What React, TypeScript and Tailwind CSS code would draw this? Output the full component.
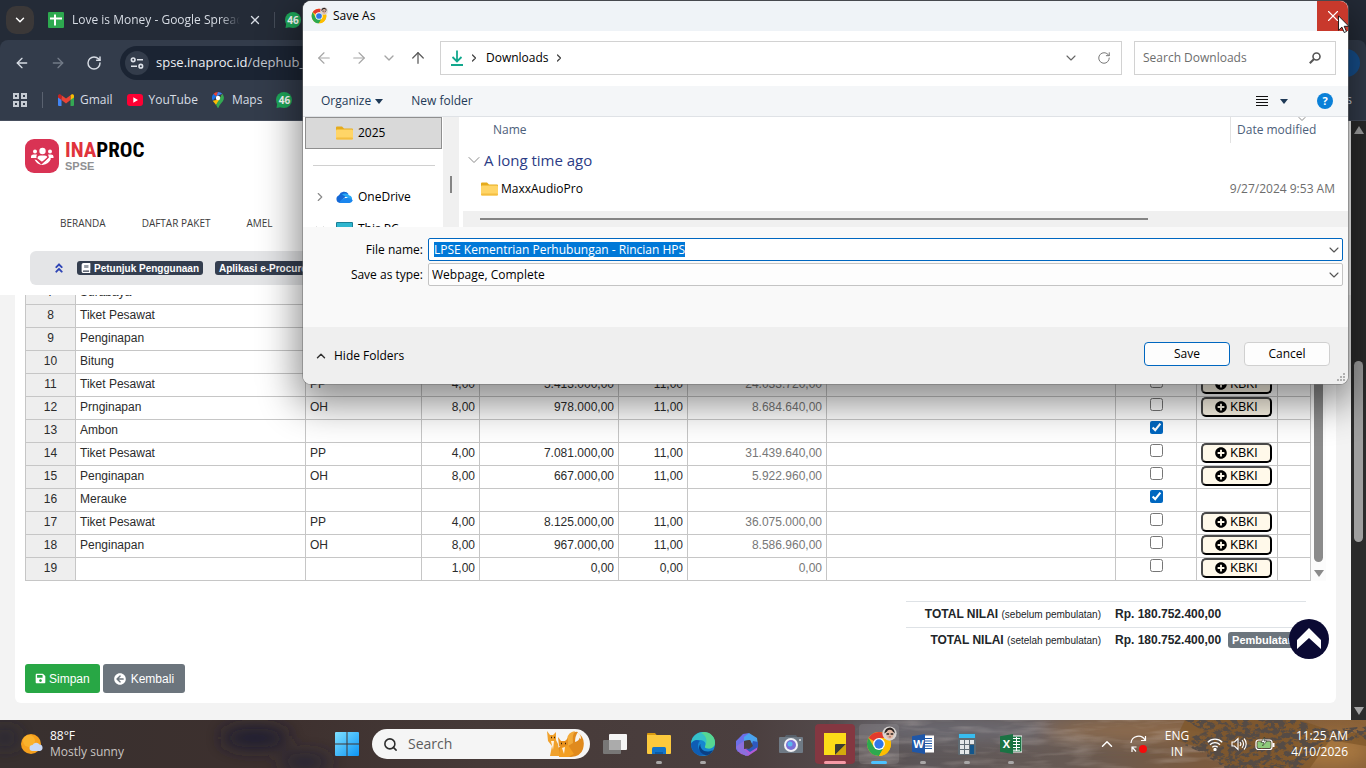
import React, { useEffect, useRef } from 'react'
import {
  ArrowLeft, ArrowRight, ArrowUp, ChevronDown, ChevronRight, ChevronUp, RotateCw, Search, X,
} from 'lucide-react'
import { FaBook, FaPlusCircle, FaSave, FaArrowCircleLeft, FaAngleDoubleUp } from 'react-icons/fa'

// ---------------------------------------------------------------------------
// Data
// ---------------------------------------------------------------------------
type Row = {
  no: number
  name: string
  unit?: string
  volume?: string
  price?: string
  tax?: string
  total?: string
  checked?: boolean
  kbki?: boolean
}

const rows: Row[] = [
  { no: 7, name: 'Surabaya', checked: true },
  { no: 8, name: 'Tiket Pesawat', kbki: true },
  { no: 9, name: 'Penginapan', kbki: true },
  { no: 10, name: 'Bitung', checked: true },
  { no: 11, name: 'Tiket Pesawat', unit: 'PP', volume: '4,00', price: '5.413.000,00', tax: '11,00', total: '24.033.720,00', kbki: true },
  { no: 12, name: 'Prnginapan', unit: 'OH', volume: '8,00', price: '978.000,00', tax: '11,00', total: '8.684.640,00', kbki: true },
  { no: 13, name: 'Ambon', checked: true },
  { no: 14, name: 'Tiket Pesawat', unit: 'PP', volume: '4,00', price: '7.081.000,00', tax: '11,00', total: '31.439.640,00', kbki: true },
  { no: 15, name: 'Penginapan', unit: 'OH', volume: '8,00', price: '667.000,00', tax: '11,00', total: '5.922.960,00', kbki: true },
  { no: 16, name: 'Merauke', checked: true },
  { no: 17, name: 'Tiket Pesawat', unit: 'PP', volume: '4,00', price: '8.125.000,00', tax: '11,00', total: '36.075.000,00', kbki: true },
  { no: 18, name: 'Penginapan', unit: 'OH', volume: '8,00', price: '967.000,00', tax: '11,00', total: '8.586.960,00', kbki: true },
  { no: 19, name: '', volume: '1,00', price: '0,00', tax: '0,00', total: '0,00', kbki: true },
]

// ---------------------------------------------------------------------------
// Icons
// ---------------------------------------------------------------------------
function ChromeIcon({ className }: { className?: string }) {
  return (
    <svg viewBox="0 0 48 48" className={className}>
      <circle cx="24" cy="24" r="22" fill="#fbc116" />
      <path d="M24 24 L4.9 13 A22 22 0 0 1 43.1 13 L24 13 Z" fill="#e33b2e" />
      <path d="M4.9 13 A22 22 0 0 0 24 46 L33.5 29.5 L14.5 29.5 Z" fill="#2da94f" />
      <path d="M24 13 H43.1 A22 22 0 0 1 24 46 L33.5 29.5 Z" fill="#fdbd00" />
      <circle cx="24" cy="24" r="11" fill="#fff" />
      <circle cx="24" cy="24" r="8.6" fill="#2f77e8" />
    </svg>
  )
}

function Avatar({ className }: { className?: string }) {
  return (
    <svg viewBox="0 0 20 20" className={className}>
      <circle cx="10" cy="10" r="9.5" fill="#d9d4d2" />
      <path d="M3 10 Q4 2 11 2 Q17 3 17 10 L15 8 L6 8 Z" fill="#2a2322" />
      <ellipse cx="10.5" cy="11" rx="5" ry="6" fill="#e3b9a4" />
      <path d="M6 9.5h3.5v2H6zM11.5 9.5H15v2h-3.500z" fill="#2a2322" />
      <path d="M9 14.500h3" stroke="#8c4a41" />
    </svg>
  )
}

function SheetsIcon() {
  return (
    <svg viewBox="0 0 16 16" className="size-4 shrink-0">
      <rect width="16" height="16" rx="1" fill="#2da94f" />
      <path d="M2 6.500h12M7 2.500v11" stroke="#fff" strokeWidth="2" />
    </svg>
  )
}

function UnreadBadge() {
  return (
    <span className="relative flex size-4 shrink-0 items-center justify-center">
      <svg viewBox="0 0 16 16" className="absolute size-4">
        <circle cx="8" cy="8" r="8" fill="#1fa85a" />
        <path d="M0.500 16 L1.500 10 L6 15 Z" fill="#1fa85a" />
      </svg>
      <span className="relative text-[10px] font-bold leading-none text-white">46</span>
    </span>
  )
}

function GmailIcon() {
  return (
    <svg viewBox="0 0 16 12" className="h-3 w-4">
      <path d="M0 1.500V11a1 1 0 0 0 1 1h2.500V4z" fill="#4285f4" />
      <path d="M12.500 12H15a1 1 0 0 0 1-1V1.500L12.500 4z" fill="#34a853" />
      <path d="M12.500 1.500V6L16 3.400V2c0-1.700-1.700-2.200-2.800-1.300z" fill="#fbbc04" />
      <path d="M3.500 6V1.200L8 4.600l4.500-3.400V6L8 9.400z" fill="#ea4335" />
      <path d="M0 2v1.400L3.500 6V1.200L2.800.7C1.700-.2 0 .4 0 2z" fill="#c5221f" />
    </svg>
  )
}

function YouTubeIcon() {
  return (
    <svg viewBox="0 0 16 12" className="h-3 w-4">
      <rect width="16" height="12" rx="3" fill="#ff0033" />
      <path d="M6.300 3.300 L11 6 L6.300 8.700z" fill="#fff" />
    </svg>
  )
}

function MapsIcon() {
  return (
    <svg viewBox="0 0 12 16" className="h-4 w-3">
      <path d="M6 0a6 6 0 0 0-4.600 2.100L4.300 4.600z" fill="#ea4335" />
      <path d="M6 0 L4.300 4.600 8.200 2.600 10.400 1.900A6 6 0 0 0 6 0z" fill="#4285f4" />
      <path d="M1.400 2.100A6 6 0 0 0 .8 8.800L4.300 4.600z" fill="#1a73e8" />
      <path d="M.8 8.800C1.500 10 3 11.500 4 13l6-8.500.4-2.600L7.600 7.200z" fill="#fbbc04" />
      <path d="M10.400 1.900C12.300 4 12.300 7 11 9 9.500 11.200 7.500 12.500 6.700 15.200 6.400 16.200 5.600 16.200 5.300 15.200 5 14.300 4.600 13.700 4 13z" fill="#34a853" />
      <circle cx="6" cy="6" r="2.200" fill="#fff" />
    </svg>
  )
}

function SiteInfoIcon() {
  return (
    <svg viewBox="0 0 14 12" className="h-3 w-3.5" fill="none" stroke="#dfe3ea" strokeWidth="1.600">
      <circle cx="3.200" cy="2.800" r="1.800" />
      <path d="M7 2.800h6M1 9.200h6" />
      <circle cx="10.800" cy="9.200" r="1.800" />
    </svg>
  )
}

function FolderIcon() {
  return (
    <svg viewBox="0 0 17 14" className="h-3.5 w-[17px] shrink-0">
      <path d="M0 1.500A1 1 0 0 1 1 .5h5L8 2.500h8a1 1 0 0 1 1 1V7H0z" fill="#e5ab1c" />
      <rect y="3.500" width="17" height="10" rx="1" fill="#ffd567" />
      <rect y="11.500" width="17" height="2" rx="1" fill="#f4be41" />
    </svg>
  )
}

function OneDriveIcon() {
  return (
    <svg viewBox="0 0 17 12" className="h-3 w-[17px] shrink-0">
      <path d="M4 12a4 4 0 0 1-1-7.700A5.500 5.500 0 0 1 12.500 3L6 9z" fill="#1468d6" />
      <path d="M6 3.500A5.500 5.500 0 0 1 13.500 4.500 3.900 3.900 0 0 1 13 12H4c1-4 4-5 8-5z" fill="#28a8f5" />
      <path d="M3.500 12c1-3.500 4-5.200 8-5 2.500 0 4.500 1 5.300 2.600A3.900 3.900 0 0 1 13.200 12z" fill="#1a86ee" />
    </svg>
  )
}

function DownloadsIcon() {
  return (
    <svg viewBox="0 0 14 16" className="h-4 w-3.5" fill="none" stroke="#12a88d" strokeWidth="1.800">
      <path d="M7 .5v11M2.500 7l4.500 4.500L11.500 7M1 15h12" />
    </svg>
  )
}

function MagnifierIcon() {
  return (
    <svg viewBox="0 0 12 12" className="size-3" fill="none" stroke="#555" strokeWidth="1.600">
      <circle cx="7.500" cy="4.500" r="3.500" />
      <path d="M5 7L.8 11.200" strokeWidth="2" />
    </svg>
  )
}

function InaprocLogo() {
  return (
    <svg viewBox="0 0 34 34" className="size-[34px]">
      <rect width="34" height="34" rx="9" fill="#d93354" />
      <g fill="#fff">
        <circle cx="17.500" cy="12" r="3.200" />
        <circle cx="10" cy="12.500" r="2" />
        <circle cx="25" cy="12.500" r="2" />
        <path d="M6 19v-1.500Q6 15.500 8.500 15.500H12Q11 17 11.500 19z" />
        <path d="M28.500 19v-1.500q0-2-2.500-2H23Q24 17 23.500 19z" />
        <path d="M12.500 19.500q0-3 3-3h4q3 0 3 3l-5.500 3.300z" />
        <path d="M9.500 20.500l3 .8 4 4 7.500-7.300 2 1.800Q24 25 17.500 26q-5.500-.5-8-5.500z" />
      </g>
      <path d="M12 20.500l4.300 4L23.500 18" fill="none" stroke="#d93354" strokeWidth="1.300" />
    </svg>
  )
}

// ---------------------------------------------------------------------------
// Browser chrome
// ---------------------------------------------------------------------------
function BrowserBars() {
  return (
    <div className="shrink-0 bg-[#242b37] text-[12px] text-[#d7dce4]">
      {/* Tab strip */}
      <div className="flex h-10 items-center pl-1.5">
        <button aria-label="Search tabs" className="flex size-7 items-center justify-center rounded-[10px] bg-[#3b3838]">
          <ChevronDown className="size-3.5 text-white" strokeWidth={2.5} />
        </button>
        <div className="ml-3.5 flex items-center">
          <SheetsIcon />
          <span className="ml-2 w-[168px] overflow-hidden whitespace-nowrap [mask-image:linear-gradient(to_right,black_88%,transparent)]">
            Love is Money - Google Spreadsheets
          </span>
          <button aria-label="Close tab" className="ml-2">
            <X className="size-3.5" strokeWidth={2.2} />
          </button>
        </div>
        <span className="ml-3 mr-2.5 h-4 w-px bg-[#454c58]" />
        <UnreadBadge />
      </div>

      {/* Toolbar */}
      <div className="flex h-[46px] items-center rounded-t-lg bg-[#333c4b] pl-3.5">
        <button aria-label="Back"><ArrowLeft className="size-4" /></button>
        <button aria-label="Forward" className="ml-5 text-[#737b88]"><ArrowRight className="size-4" /></button>
        <button aria-label="Reload" className="ml-5"><RotateCw className="size-4" strokeWidth={2.2} /></button>
        <div className="ml-[18px] flex h-[34px] flex-1 items-center rounded-full bg-[#1b2433] pl-[5px]">
          <span className="flex size-6 items-center justify-center rounded-full bg-[#333c4b]">
            <SiteInfoIcon />
          </span>
          <span className="ml-[7px] text-[13px] text-[#c3c8d0]">
            <span className="text-[#edf0f4]">spse.inaproc.id</span>/dephub_
          </span>
        </div>
        <span className="ml-4 mr-1.5 size-7 rounded-full bg-[#16508f]" />
      </div>

      {/* Bookmarks */}
      <div className="flex h-[35px] items-center border-b border-[#474f5e] bg-[#333c4b] pb-1.5 pl-3">
        <svg viewBox="0 0 16 16" className="size-4" fill="none" stroke="#c6cbd3" strokeWidth="2">
          <path d="M2 2h4v4H2zM10 2h4v4h-4zM2 10h4v4H2zM10 10h4v4h-4z" />
        </svg>
        <span className="ml-3.5 mr-[15px] h-4 w-px bg-[#5a6270]" />
        <a href="#gmail" className="flex items-center gap-1.5"><GmailIcon />Gmail</a>
        <a href="#youtube" className="ml-3.5 flex items-center gap-1.5"><YouTubeIcon />YouTube</a>
        <a href="#maps" className="ml-3.5 mr-3.5 flex items-center gap-2"><MapsIcon />Maps</a>
        <UnreadBadge />
        <span className="ml-auto mr-3.5">All Bookmarks</span>
      </div>
    </div>
  )
}

// ---------------------------------------------------------------------------
// SPSE page
// ---------------------------------------------------------------------------
function PageHeader() {
  return (
    <header className="shrink-0 bg-white">
      <div className="flex h-[34px] items-start gap-[6px] pl-[25px] mt-[18px]">
        <InaprocLogo />
        <div>
          <div className="font-['Liberation_Sans_Narrow','Roboto_Condensed','Liberation_Sans',sans-serif] text-[21px] font-bold leading-[22px] text-black">
            <span className="text-[#e0333c]">INA</span>PROC
          </div>
          <div className="font-['Liberation_Sans',sans-serif] text-[11px] font-bold leading-[10px] text-[#8f9092]">SPSE</div>
        </div>
      </div>
      <nav className="mt-[42px] flex h-4 items-center gap-9 pl-[60px] text-[10px] text-[#3c3c3c]">
        <a href="#beranda">BERANDA</a>
        <a href="#daftar">DAFTAR PAKET</a>
        <a href="#amel">AMEL</a>
      </nav>
      <div className="mx-[30px] mt-5 mb-[10px] flex h-[34px] items-center rounded-md bg-[#e4e5e7] pl-[23px] font-['Liberation_Sans',sans-serif] text-[10px] font-bold text-white">
        <FaAngleDoubleUp className="size-3 text-[#2f45b5]" />
        <a href="#petunjuk" className="ml-3 flex h-3.5 items-center gap-[3px] rounded-[3px] bg-[#343e4f] px-1">
          <FaBook className="size-2.5" />
          Petunjuk Penggunaan
        </a>
        <a href="#aplikasi" className="ml-3 flex h-3.5 items-center rounded-[3px] bg-[#343e4f] px-1">
          Aplikasi e-Procurement
        </a>
      </div>
    </header>
  )
}

function PriceTable() {
  return (
    <div className="flex min-h-0 flex-1">
      <div className="flex min-w-0 flex-1 flex-col justify-end overflow-hidden">
        <table className="w-full table-fixed border-collapse text-[12px] leading-[14px] text-[#2b2b2b]">
          <colgroup>
            <col className="w-[50px]" />
            <col className="w-[230px]" />
            <col className="w-[116px]" />
            <col className="w-[58px]" />
            <col className="w-[139px]" />
            <col className="w-[69px]" />
            <col className="w-[139px]" />
            <col />
            <col className="w-[81px]" />
            <col className="w-[81px]" />
            <col className="w-[33px]" />
          </colgroup>
          <tbody>
            {rows.map(row => (
              <tr key={row.no} className="h-[23px] [&>td]:border [&>td]:border-[#c6c6c6] [&>td]:px-1 [&>td]:pt-0 [&>td]:pb-0.5">
                <th scope="row" className="border border-[#c6c6c6] bg-[#eeeeee] pb-0.5 text-center font-normal">{row.no}</th>
                <td>{row.name}</td>
                <td>{row.unit}</td>
                <td className="text-right">{row.volume}</td>
                <td className="text-right">{row.price}</td>
                <td className="text-right">{row.tax}</td>
                <td className="text-right text-[#777]">{row.total}</td>
                <td />
                <td>
                  <input
                    type="checkbox"
                    defaultChecked={row.checked}
                    aria-label={`Header ${row.no}`}
                    className="mx-auto mb-1 block size-[13px] accent-[#0067c0]"
                  />
                </td>
                <td>
                  {row.kbki && (
                    <button className="flex h-5 w-[71px] items-center justify-center gap-[3px] rounded-[5px] border-2 border-black border-t-[#4a4a4a] border-l-[#4a4a4a] bg-[#fff9ea] text-black">
                      <FaPlusCircle className="size-3" />
                      KBKI
                    </button>
                  )}
                </td>
                <td />
              </tr>
            ))}
          </tbody>
        </table>
      </div>
      {/* Grid scrollbar */}
      <div className="flex w-[15px] shrink-0 flex-col items-center bg-[#fcfcfc]">
        <div className="w-[9px] flex-1 rounded-b-full bg-[#8b8b8b]" />
        <svg viewBox="0 0 10 7" className="mt-2 mb-1 h-[7px] w-2.5"><path d="M0 0h10L5 7z" fill="#8b8b8b" /></svg>
      </div>
    </div>
  )
}

function Totals() {
  return (
    <table className="ml-auto mr-[20px] mt-5 w-[400px] text-[12px] leading-[14px] text-[#212529]">
      <tbody>
        <tr className="h-[26px] border-t border-[#dee2e6]">
          <th scope="row" className="w-[195px] text-right">
            TOTAL NILAI <span className="text-[10px] font-normal">(sebelum pembulatan)</span>
          </th>
          <td className="pl-3.5 font-bold">Rp. 180.752.400,00</td>
        </tr>
        <tr className="h-[26px] border-t border-[#dee2e6]">
          <th scope="row" className="text-right">
            TOTAL NILAI <span className="text-[10px] font-normal">(setelah pembulatan)</span>
          </th>
          <td className="whitespace-nowrap pl-3.5 font-bold">
            Rp. 180.752.400,00
            <button className="ml-[7px] h-4 rounded-[3px] bg-[#6c757d] px-1 text-[11px] font-bold leading-4 text-white">
              Pembulatan
            </button>
          </td>
        </tr>
      </tbody>
    </table>
  )
}

function PageScrollbar() {
  return (
    <div className="flex w-[15px] shrink-0 flex-col items-center bg-[#2b2b2b] py-[5px]">
      <svg viewBox="0 0 10 8" className="h-2 w-2.5"><path d="M5 0l5 8H0z" fill="#a3a3a3" /></svg>
      <div className="basis-[227px]" />
      <div className="w-[9px] flex-1 rounded-full bg-[#9f9f9f]" />
      <div className="basis-[165px]" />
      <svg viewBox="0 0 10 8" className="h-2 w-2.5"><path d="M0 0h10L5 8z" fill="#a3a3a3" /></svg>
    </div>
  )
}

function SpsePage() {
  return (
    <div className="flex min-h-0 flex-1">
      <main className="relative flex min-w-0 flex-1 flex-col bg-[#f3f3f3]">
        <div className="flow-root shrink-0 bg-white"><PageHeader /></div>
        <div className="mx-[15px] mb-[17px] flex min-h-0 flex-1 flex-col rounded-b-md bg-white px-2.5 pb-2.5 font-['Liberation_Sans',sans-serif]">
          <PriceTable />
          <Totals />
          <div className="mt-[11px] flex gap-[3px] text-[12px] text-white">
            <button className="flex h-[29px] items-center gap-[3px] rounded-[3px] bg-[#28a745] px-2.5">
              <FaSave className="size-[11px]" />
              Simpan
            </button>
            <button className="flex h-[29px] items-center gap-[5px] rounded-[3px] bg-[#6c757d] px-[11px]">
              <FaArrowCircleLeft className="size-3" />
              Kembali
            </button>
          </div>
        </div>
        <button aria-label="Back to top" className="absolute bottom-[61px] right-[22px] flex size-10 items-center justify-center rounded-full bg-[#0b0a33]">
          <svg viewBox="0 0 24 22" className="h-[22px] w-6"><path d="M12 0l12 12v9L12 10 0 21v-9z" fill="#fff" /></svg>
        </button>
      </main>
      <PageScrollbar />
    </div>
  )
}

// ---------------------------------------------------------------------------
// Save As dialog
// ---------------------------------------------------------------------------
function SaveAsDialog() {
  const fileName = useRef<HTMLInputElement>(null)

  useEffect(() => {
    fileName.current?.focus()
    fileName.current?.select()
  }, [])

  return (
    <section
      role="dialog"
      aria-label="Save As"
      className="absolute left-[303px] right-[18px] top-px flex flex-col overflow-hidden rounded-lg bg-white text-[12px] text-black shadow-[0_0_0_1px_rgba(110,110,110,0.5),0_14px_38px_6px_rgba(0,0,0,0.45)]"
    >
      {/* Title bar */}
      <div className="flex h-[30px] items-center bg-[#eff3f7] pl-2">
        <span className="relative">
          <ChromeIcon className="size-4" />
          <Avatar className="absolute -right-px -top-px size-2" />
        </span>
        <span className="ml-[6px]">Save As</span>
        <button aria-label="Close" className="ml-auto flex h-full w-[31px] items-center justify-center bg-[#c8392c]">
          <X className="size-[18px] text-white" strokeWidth={1.5} />
        </button>
      </div>

      {/* Navigation */}
      <div className="flex h-[55px] items-center pl-3 pr-3 pb-px">
        <button aria-label="Back" className="text-[#a5a5a5]"><ArrowLeft className="size-[18px]" strokeWidth={1.5} /></button>
        <button aria-label="Forward" className="ml-[17px] text-[#a5a5a5]"><ArrowRight className="size-[18px]" strokeWidth={1.5} /></button>
        <button aria-label="Recent locations" className="ml-[13px] text-[#a5a5a5]"><ChevronDown className="size-4" /></button>
        <button aria-label="Up" className="ml-3 text-[#5c5c5c]"><ArrowUp className="size-[18px]" strokeWidth={1.7} /></button>
        <div className="ml-[13px] flex h-[34px] flex-1 items-center border border-[#d2d2d2] pl-[9px] pr-2.5">
          <DownloadsIcon />
          <ChevronRight className="ml-1 size-3 text-[#444]" strokeWidth={2.5} />
          <span className="ml-1.5">Downloads</span>
          <ChevronRight className="ml-1 size-3 text-[#444]" strokeWidth={2.5} />
          <button aria-label="Previous locations" className="ml-auto text-[#666]"><ChevronDown className="size-4" strokeWidth={1.7} /></button>
          <button aria-label="Refresh" className="ml-[18px] text-[#777]"><RotateCw className="size-3.5" strokeWidth={1.700} /></button>
        </div>
        <label className="ml-3 flex h-[34px] w-[202px] items-center border border-[#d2d2d2] pl-2 pr-3.5">
          <input type="search" aria-label="Search Downloads" placeholder="Search Downloads" className="min-w-0 flex-1 outline-none placeholder:text-[#6d6d6d]" />
          <MagnifierIcon />
        </label>
      </div>

      {/* Command bar */}
      <div className="flex h-[31px] items-center border-b border-[#dfe2e6] bg-[#f4f6f8] pl-[18px] pr-[15px] text-[#1f3a57]">
        <button className="flex items-center gap-1">
          Organize
          <svg viewBox="0 0 8 5" className="h-[5px] w-2"><path d="M0 0h8L4 5z" fill="#1f3a57" /></svg>
        </button>
        <button className="ml-7">New folder</button>
        <button aria-label="Change view" className="ml-auto flex items-center gap-3">
          <svg viewBox="0 0 12 11" className="h-[11px] w-3" stroke="#111"><path d="M0 .5h12M0 3.500h12M0 6.500h12M0 9.500h12" /></svg>
          <svg viewBox="0 0 8 5" className="h-[5px] w-2"><path d="M0 0h8L4 5z" fill="#1f3a57" /></svg>
        </button>
        <button aria-label="Help" className="ml-[29px] flex size-4 items-center justify-center rounded-full bg-[#0a80d8] text-[11px] font-bold text-white">?</button>
      </div>

      {/* Folders and files */}
      <div className="flex h-[110px] overflow-hidden">
        <div className="w-[140px] shrink-0 pl-0.5">
          <div className="mr-px flex h-8 items-center gap-[5px] border border-[#8f8f8f] bg-[#d9d9d9] pl-[30px]">
            <FolderIcon />
            2025
          </div>
          <hr className="mx-2 mt-4 mb-[15px] border-[#d0d0d0]" />
          <div className="flex h-8 items-center pl-2">
            <ChevronRight className="size-3.5 text-[#8a8a8a]" />
            <span className="ml-[9px] flex items-center gap-[5px]"><OneDriveIcon />OneDrive</span>
          </div>
          <div className="flex h-8 items-center pl-2">
            <ChevronDown className="size-3.5 text-[#8a8a8a]" />
            <span className="ml-[9px] flex items-center gap-[5px]">
              <svg viewBox="0 0 17 14" className="h-3.5 w-[17px]">
                <rect width="17" height="11" rx="1" fill="#1a7f96" />
                <rect x="1" y="1" width="15" height="9" fill="#2fb6cf" />
                <path d="M5 13h7" stroke="#777" strokeWidth="2" />
              </svg>
              This PC
            </span>
          </div>
        </div>
        <div className="w-4 shrink-0 bg-[#f0f0f0] pt-[59px]">
          <div className="mx-auto h-[17px] w-0.5 bg-[#858585]" />
        </div>
        <div className="ml-1 flex min-w-0 flex-1 flex-col">
          <div className="flex h-[26px] items-center pl-[30px] text-[#4c607a]">
            <span>Name</span>
            <span className="relative ml-auto flex h-full w-[118px] items-center border-l border-[#e2e2e2] pl-1.5">
              Date modified
              <ChevronDown className="absolute left-[65px] -top-1 size-3 text-[#888]" />
            </span>
          </div>
          <div className="mt-1.5 flex h-[22px] items-center pl-px text-[15px] text-[#2b3c86]">
            <ChevronDown className="size-5 text-[#8a8a8a]" strokeWidth={1.200} />
            A long time ago
          </div>
          <div className="mt-[7px] flex h-[22px] items-center gap-[3px] pl-[18px]">
            <FolderIcon />
            MaxxAudioPro
            <span className="ml-auto pr-[13px] text-[#6d6d6d]">9/27/2024 9:53 AM</span>
          </div>
          <div className="mt-auto h-4 bg-[#f0f0f0] pl-[17px] pt-[7px]">
            <div className="h-0.5 w-[77%] bg-[#858585]" />
          </div>
        </div>
      </div>

      {/* File fields */}
      <div className="flex h-[100px] flex-col gap-[2px] bg-[#f9f9f9] pr-[5px] pt-[11px]">
        <div className="flex items-center gap-[5px]">
          <label htmlFor="file-name" className="w-[120px] text-right">File name:</label>
          <div className="flex h-[23px] min-w-0 flex-1 items-center rounded-[2px] border border-[#0067c0] bg-white pl-[5px]">
            <input
              id="file-name"
              ref={fileName}
              defaultValue="LPSE Kementrian Perhubungan - Rincian HPS"
              className="h-[15px] min-w-0 flex-1 leading-[15px] outline-none selection:bg-[#0078d7] selection:text-white"
            />
            <ChevronDown className="size-4 text-[#555]" strokeWidth={1.600} />
          </div>
        </div>
        <div className="flex items-center gap-[5px]">
          <label htmlFor="file-type" className="w-[120px] text-right">Save as type:</label>
          <div className="flex h-[23px] min-w-0 flex-1 items-center rounded-[2px] border border-[#c4c4c4] bg-[#fdfdfd] pl-[3px]">
            <select id="file-type" className="min-w-0 flex-1 appearance-none outline-none">
              <option>Webpage, Complete</option>
            </select>
            <ChevronDown className="size-4 text-[#555]" strokeWidth={1.600} />
          </div>
        </div>
      </div>

      {/* Footer */}
      <div className="relative flex h-[57px] items-center bg-[#efefef] pb-[3px] pl-[11px] pr-[18px]">
        <button className="flex items-center gap-1.5 pt-1">
          <ChevronUp className="size-3.5 text-[#333]" strokeWidth={2.500} />
          Hide Folders
        </button>
        <button className="ml-auto h-6 w-[86px] rounded border border-[#0067c0] bg-[#fdfdfd]">Save</button>
        <button className="ml-3.5 h-6 w-[86px] rounded border border-[#d0d0d0] bg-[#fdfdfd]">Cancel</button>
        <svg viewBox="0 0 9 9" className="absolute bottom-0.5 right-0.5 size-[9px]" fill="#b0b0b0">
          <path d="M6 0h2v2H6zM3 3h2v2H3zM6 3h2v2H6zM0 6h2v2H0zM3 6h2v2H3zM6 6h2v2H6z" />
        </svg>
      </div>
    </section>
  )
}

// ---------------------------------------------------------------------------
// Taskbar
// ---------------------------------------------------------------------------
function Wallpaper() {
  return (
    <svg viewBox="0 0 1366 48" preserveAspectRatio="none" className="absolute inset-0 size-full">
      <defs>
        <linearGradient id="sand" x1="0" x2="1">
          <stop offset="0" stopColor="#38302f" />
          <stop offset="0.200" stopColor="#3d302e" />
          <stop offset="0.350" stopColor="#463a38" />
          <stop offset="0.550" stopColor="#4b3f3f" />
          <stop offset="0.680" stopColor="#5d5759" />
          <stop offset="0.780" stopColor="#675a54" />
          <stop offset="0.880" stopColor="#7a5a3f" />
          <stop offset="1" stopColor="#8a6138" />
        </linearGradient>
        <filter id="soft" x="-20%" y="-60%" width="140%" height="220%"><feGaussianBlur stdDeviation="9" /></filter>
        <filter id="rough" x="0" y="0" width="100%" height="100%">
          <feTurbulence type="fractalNoise" baseFrequency="0.140 0.220" numOctaves="4" seed="4" />
          <feColorMatrix values="0 0 0 0 0.090  0 0 0 0 0.070  0 0 0 0 0.060  8 0 0 0 -3.500" />
          <feComposite in2="SourceGraphic" operator="in" />
        </filter>
        <filter id="grain" x="0" y="0" width="100%" height="100%">
          <feTurbulence type="fractalNoise" baseFrequency="0.020 0.120" numOctaves="3" seed="9" />
          <feColorMatrix values="0 0 0 0 0.720  0 0 0 0 0.640  0 0 0 0 0.600  2 0 0 0 -0.900" />
          <feComposite in2="SourceGraphic" operator="in" />
        </filter>
      </defs>
      <rect width="1366" height="48" fill="url(#sand)" />
      <g filter="url(#soft)">
        <ellipse cx="255" cy="18" rx="34" ry="10" fill="#1e1f30" />
        <ellipse cx="305" cy="42" rx="26" ry="7" fill="#242235" />
        <ellipse cx="5" cy="18" rx="14" ry="7" fill="#262838" />
        <ellipse cx="960" cy="10" rx="120" ry="10" fill="#6d6c74" />
        <ellipse cx="1130" cy="10" rx="90" ry="8" fill="#96714f" />
        <ellipse cx="1330" cy="30" rx="40" ry="16" fill="#a9783f" />
      </g>
      <path d="M860 0H1190L1230 48H840z" fill="#fff" opacity="0.350" filter="url(#grain)" />
      <path d="M1185 0H1300L1340 14L1366 12V26L1330 20L1310 48H1230L1200 28L1175 20z" fill="#7d5628" opacity="0.700" />
      <path d="M1185 0H1295L1330 10L1366 6V20L1325 22L1300 48H1225L1200 32L1178 22L1205 12z" fill="#fff" filter="url(#rough)" />
    </svg>
  )
}

type AppButtonProps = { label: string; running?: string; active?: string; children: React.ReactNode }

function AppButton({ label, running, active = '', children }: AppButtonProps) {
  return (
    <button aria-label={label} className={`relative flex h-10 w-10 items-center justify-center rounded ${active}`}>
      {children}
      {running && <span className={`absolute bottom-0 h-[3px] rounded-full ${running}`} />}
    </button>
  )
}

const idle = 'w-1.5 bg-[#a9a7a7]'

function Foxes() {
  return (
    <svg viewBox="0 0 40 28" className="ml-auto h-7 w-10">
      <path d="M26 10Q28 0 34 2Q31 6 31 12Q38 10 34 3Q42 8 39 19Q37 26 27 27L14 26V18z" fill="#e08a1d" />
      <path d="M3 1L6 5H9L12 2L12 10L14 14L16 26H6L8 16L4 11z" fill="#f0a12c" />
      <path d="M23 9Q24 2 31 1Q28 5 29 13L24 16z" fill="#f2aa3a" />
      <path d="M14 7L17 11H21L24 8L24 15L20 19L15 16z" fill="#e8921f" />
      <path d="M16 18L24 15L30 24L24 27H15z" fill="#f39f22" />
      <path d="M7 11L10 11L9 20zM18 18l3-1-1 7z" fill="#fff3df" />
      <path d="M7 7.500h1M10 7.500h1M17 13.500h1M21 13.500h1" stroke="#3b220b" strokeWidth="1.500" />
      <path d="M34 3Q37 4 37 9L34 7z" fill="#fff3df" />
    </svg>
  )
}

function OfficeIcon({ letter, dark, light }: { letter: string; dark: string; light: string }) {
  const sheet = letter === 'X'
  return (
    <svg viewBox="0 0 22 20" className="h-5 w-[22px]">
      <rect x="10" y="2" width="12" height="16" fill={sheet ? light : '#fff'} stroke="#fff" strokeWidth="1" />
      <path
        d={sheet ? 'M12 4.500h8M12 7.500h8M12 10.500h8M12 13.500h8M12 16.200h8M16.500 3v14' : 'M12 4.500h8M12 7h8M12 9.500h8M12 12h8M12 14.500h8'}
        stroke={sheet ? '#fff' : dark}
      />
      <path d="M0 2.200L13 0v20L0 17.800z" fill={dark} />
      <text x="6.500" y="14" textAnchor="middle" fontSize="11" fontWeight="700" fill="#fff" fontFamily="Open Sans">{letter}</text>
    </svg>
  )
}

function TaskbarApps() {
  return (
    <div className="mr-[11px] flex shrink-0 items-center gap-1">
      <AppButton label="Start">
        <svg viewBox="0 0 24 24" className="size-6">
          <defs>
            <linearGradient id="win" x1="0" y1="0" x2="1" y2="1">
              <stop offset="0" stopColor="#7fe0ff" />
              <stop offset="1" stopColor="#0c95f5" />
            </linearGradient>
          </defs>
          <path d="M0 1a1 1 0 0 1 1-1h10.500v11.500H0zM12.500 0H23a1 1 0 0 1 1 1v10.500H12.500zM0 12.500h11.500V24H1a1 1 0 0 1-1-1zM12.500 12.500H24V23a1 1 0 0 1-1 1H12.500z" fill="url(#win)" />
        </svg>
      </AppButton>
      <button className="mx-px flex h-[30px] w-[218px] items-center rounded-full bg-[#f5f5f5] pl-[11px] pr-1.5 text-[14px] text-[#5c5c5c]">
        <Search className="size-[15px] text-[#2d2d2d]" strokeWidth={2.500} />
        <span className="ml-2.5">Search</span>
        <Foxes />
      </button>
      <AppButton label="Task view">
        <svg viewBox="0 0 24 22" className="h-[22px] w-6">
          <rect x="6" y="1" width="18" height="16" rx="1" fill="#f4f4f4" />
          <rect x="0" y="7" width="18" height="14" rx="1" fill="#7d7d7d" opacity="0.900" />
          <path d="M6 7h12v10H6z" fill="#ababab" />
        </svg>
      </AppButton>
      <AppButton label="File Explorer" running={idle}>
        <svg viewBox="0 0 24 22" className="h-[22px] w-6">
          <path d="M0 1a1 1 0 0 1 1-1h7l2 2.500H0z" fill="#d99a10" />
          <path d="M0 2h23a1 1 0 0 1 1 1v17a1 1 0 0 1-1 1H1a1 1 0 0 1-1-1z" fill="#fbc93d" />
          <path d="M5 15.500a1.500 1.500 0 0 1 1.500-1.500h11a1.500 1.500 0 0 1 1.500 1.500V21H5z" fill="#1274c9" />
          <path d="M8 19h8v2H8z" fill="#0d5ba6" />
        </svg>
      </AppButton>
      <AppButton label="Edge" running={idle}>
        <svg viewBox="0 0 24 24" className="size-6">
          <circle cx="12" cy="12" r="12" fill="#1686d0" />
          <path d="M0 11C1 4 6 0 12 0c7 0 12 5 12 10.500 0 4-3 6-6.500 6-2.500 0-4-1-3.500-2C15.500 12 14 8 9 8c-4 0-7 1-9 3z" fill="#35c1c8" />
          <path d="M13 0c6.500 0 11 5 11 10.500 0 4-3 6-6.500 6-2.500 0-4-1-3.500-2C16 11 17 4 10 1z" fill="#5fdc85" opacity="0.800" />
          <path d="M9 9C5 12 7 21 15 22.500 9 26 0 21 0 12 2 8 6 7 9 9z" fill="#0f5db4" />
          <path d="M9.500 12c-1 4 3 8 8 7.500 2-.2 3.500-1 4.500-1.500-2 4-5 5.300-7 5.300C9 22 6 16 9.500 12z" fill="#0b3f84" />
        </svg>
      </AppButton>
      <AppButton label="Microsoft 365">
        <svg viewBox="0 0 24 24" className="size-6">
          <path d="M8 2l6-1-5 8v8L3 20 1 17V9z" fill="#6c6fe8" />
          <path d="M14 1l8 5 1 7-5 2-3-7-6 1V5z" fill="#4aa3ee" />
          <path d="M23 12l-1 6-9 6-7-2-3-3 6-2 5-1 4-4z" fill="#b05bd8" />
          <path d="M23 10v5l-8 5-4-3 5-2 2-6z" fill="#2e59bd" />
          <path d="M1 15l3 5 7 4 3-2-5-5V9L3 13z" fill="#8c6fdd" />
          <path d="M9 9l6-1 3 6-4 3-5-1z" fill="#4a4142" />
        </svg>
      </AppButton>
      <AppButton label="Camera">
        <svg viewBox="0 0 24 20" className="h-5 w-6">
          <path d="M7 1h10l2 3H5z" fill="#57606a" />
          <rect y="3" width="24" height="16" rx="1" fill="#6f7a85" />
          <circle cx="12" cy="11" r="7" fill="#f2f2f5" />
          <circle cx="12" cy="11" r="5" fill="#7c6fd6" />
          <circle cx="11" cy="10" r="2.500" fill="#58b6ee" />
          <circle cx="21" cy="6" r="1" fill="#e5e5e5" />
        </svg>
      </AppButton>
      <AppButton label="Sticky Notes" active="bg-[#843741]" running="w-[22px] bg-[#f59aa6]">
        <svg viewBox="0 0 22 22" className="size-[22px]">
          <path d="M0 0h22v11L11 22H0z" fill="#fcdc18" />
          <path d="M11 22V12a1 1 0 0 1 1-1h10z" fill="#3c3c32" />
          <path d="M11 22h11V11z" fill="#d3a90c" />
        </svg>
      </AppButton>
      <AppButton label="Chrome" active="bg-white/10" running="w-4 bg-[#4cc2ff]">
        <ChromeIcon className="size-[26px]" />
        <Avatar className="absolute right-0.5 top-0.5 size-[15px]" />
      </AppButton>
      <AppButton label="Word" running={idle}><OfficeIcon letter="W" dark="#1f57a8" light="#ffffff" /></AppButton>
      <AppButton label="Calculator" running={idle}>
        <svg viewBox="0 0 18 22" className="h-[22px] w-[18px]">
          <rect width="18" height="22" rx="1" fill="#5f6b73" />
          <rect x="1" y="1" width="16" height="4" fill="#38bdf0" />
          <path d="M2 7h4v4H2zM7 7h4v4H7zM12 7h4v4h-4zM2 12h4v4H2zM7 12h4v4H7zM2 17h4v4H2zM7 17h4v4H7z" fill="#e3e6e8" />
          <path d="M12 12h4v9h-4z" fill="#12568c" />
        </svg>
      </AppButton>
      <AppButton label="Excel" running={idle}><OfficeIcon letter="X" dark="#1a7343" light="#1a7343" /></AppButton>
    </div>
  )
}

function Taskbar() {
  return (
    <footer className="relative h-12 shrink-0 overflow-hidden text-[12px] leading-4 text-white">
      <Wallpaper />
      <div className="relative flex h-full items-center">
        <div className="flex flex-1 items-center gap-[7px] pl-[21px]">
          <svg viewBox="0 0 22 20" className="h-5 w-[22px]">
            <circle cx="10" cy="10" r="10" fill="#f6a01d" />
            <circle cx="8" cy="7" r="6" fill="#fcb933" opacity="0.700" />
            <path d="M11.500 17a3 3 0 0 1 0-6 4 4 0 0 1 7-.5 3.300 3.300 0 0 1 .5 6.500z" fill="#c9d9f5" />
          </svg>
          <div>
            <div>88°F</div>
            <div className="text-[#c9c4c2]">Mostly sunny</div>
          </div>
        </div>
        <TaskbarApps />
        <div className="flex flex-1 items-center justify-end pr-[18px]">
          <ChevronUp className="size-[18px]" />
          <svg viewBox="0 0 18 18" className="ml-3.5 size-[18px]" fill="none" stroke="#fff" strokeWidth="1.200">
            <path d="M1 8a7.500 7.500 0 0 1 14-3M15.500 1v4.500H11M2 17v-5h4.500M2 12l4 4.500" />
            <circle cx="13" cy="14" r="4" fill="#f40b0b" stroke="none" />
          </svg>
          <div className="ml-[17px] text-center"><div>ENG</div><div>IN</div></div>
          <svg viewBox="0 0 16 14" className="ml-[18px] h-3.5 w-4" fill="none" stroke="#fff" strokeWidth="1.300">
            <path d="M.8 5.200a10.200 10.200 0 0 1 14.400 0M3 7.800a7 7 0 0 1 10 0M5.300 10.300a4 4 0 0 1 5.400 0" />
            <circle cx="8" cy="12.500" r="1" fill="#fff" />
          </svg>
          <svg viewBox="0 0 16 14" className="ml-2 h-3.5 w-4" fill="none" stroke="#fff" strokeWidth="1.100">
            <path d="M1 5h2.500L7 1.500v11L3.500 9H1zM9 5a3 3 0 0 1 0 4M11 3.200a5.500 5.500 0 0 1 0 7.600M13 1.500a8 8 0 0 1 0 11" />
          </svg>
          <svg viewBox="0 0 20 14" className="ml-2 h-3.5 w-5" fill="none" stroke="#fff" strokeWidth="1.200">
            <rect x="1" y="3" width="16" height="9.500" rx="2.500" />
            <rect x="2.500" y="4.500" width="13" height="6.500" rx="1" fill="#8ecb7c" stroke="none" />
            <path d="M18.500 6v4" strokeWidth="2" />
            <path d="M9.500 0L6 5.500h3L7.500 9 12 4H9z" fill="#fff" stroke="#23301c" strokeWidth="0.600" />
          </svg>
          <div className="ml-4 text-right"><div>11:25 AM</div><div>4/10/2026</div></div>
        </div>
      </div>
    </footer>
  )
}

export default function App() {
  return (
    <div className="relative flex h-screen flex-col overflow-hidden bg-[#242b37] font-['Open_Sans','Noto_Sans',sans-serif]">
      <BrowserBars />
      <SpsePage />
      <Taskbar />
      <SaveAsDialog />
      {/* Mouse pointer */}
      <svg viewBox="0 0 12 19" className="absolute right-[16px] top-[15px] h-[19px] w-3">
        <path d="M.5.8v14.500l3.400-3.200 2.300 5.400 2.300-1-2.300-5.200h4.700z" fill="#fff" stroke="#111" strokeWidth="0.900" />
      </svg>
    </div>
  )
}
